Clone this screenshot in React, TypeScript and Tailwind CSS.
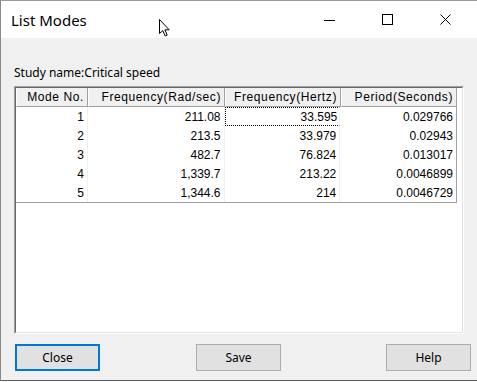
import React from "react";

const columns = [
  { title: "Mode No.", width: "w-[72px]" },
  { title: "Frequency(Rad/sec)", width: "w-[137px]" },
  { title: "Frequency(Hertz)", width: "w-[116px]" },
  { title: "Period(Seconds)", width: "w-[116px]" },
];

const rows = [
  ["1", "211.08", "33.595", "0.029766"],
  ["2", "213.5", "33.979", "0.02943"],
  ["3", "482.7", "76.824", "0.013017"],
  ["4", "1,339.7", "213.22", "0.0046899"],
  ["5", "1,344.6", "214", "0.0046729"],
];

function TitleBar() {
  return (
    <div className="relative flex h-[37px] items-center bg-white">
      <span className="pl-[10px] pt-[1px] text-[15px] text-black">List Modes</span>
      {/* mouse cursor */}
      <svg className="absolute left-[157px] top-[17px]" width="13" height="20" viewBox="0 0 13 20">
        <path
          d="M1.5 1.5 L1.5 15.5 L4.8 12.6 L7.2 18 L9.2 17.1 L6.9 11.8 L11.2 11.8 Z"
          fill="white"
          stroke="black"
          strokeWidth="1"
          strokeLinejoin="miter"
        />
      </svg>
      <div className="ml-auto flex h-full items-center pr-[3px]">
        <button className="flex h-full w-[58px] items-center justify-center">
          <svg width="11" height="11" viewBox="0 0 11 11">
            <path d="M0 6.5 H11" stroke="black" strokeWidth="1" />
          </svg>
        </button>
        <button className="flex h-full w-[58px] items-center justify-center">
          <svg width="11" height="11" viewBox="0 0 11 11">
            <rect x="0.5" y="0.5" width="10" height="10" fill="none" stroke="black" strokeWidth="1" />
          </svg>
        </button>
        <button className="flex h-full w-[58px] items-center justify-center">
          <svg width="11" height="11" viewBox="0 0 11 11">
            <path d="M0.5 0.5 L10.5 10.5 M10.5 0.5 L0.5 10.5" stroke="black" strokeWidth="1" />
          </svg>
        </button>
      </div>
    </div>
  );
}

function ModeTable() {
  return (
    <div className="ml-[13px] mt-[5px] h-[248px] w-[450px] border border-t-[#a0a0a0] border-l-[#a0a0a0] border-r-white border-b-white">
      <div className="h-full w-full border border-t-[#696969] border-l-[#696969] border-r-[#e3e3e3] border-b-[#e3e3e3] bg-white font-['Liberation_Sans',Arial,sans-serif] text-[12px] text-black">
        <div className="flex h-[19px]">
          {columns.map((c) => (
            <div
              key={c.title}
              className={`${c.width} flex items-center justify-end border-r border-b border-r-[#a0a0a0] border-b-[#a0a0a0] border-l border-l-white bg-[#f0f0f0] pr-[3px] tracking-[0.6px]`}
            >
              {c.title}
            </div>
          ))}
        </div>
        <div className="w-[441px] border-r border-b border-[#a0a0a0]">
          {rows.map((r, i) => (
            <div key={i} className="flex h-[19px]">
              {r.map((v, j) => (
                <div
                  key={j}
                  className={`${columns[j].width} flex items-center justify-end ${
                    j < 3 ? "border-r border-r-[#f0f0f0]" : ""
                  } ${i === 0 && j === 2 ? "border border-dotted border-black pr-[2px]" : "pr-[3px]"}`}
                >
                  {v}
                </div>
              ))}
            </div>
          ))}
        </div>
      </div>
    </div>
  );
}

function DialogButton({ label, focused, className }: { label: string; focused?: boolean; className?: string }) {
  return (
    <button
      className={`flex h-[27px] w-[85px] items-center justify-center bg-[#e1e1e1] text-[12px] text-black ${
        focused ? "border-2 border-[#0078d7]" : "border border-[#adadad]"
      } ${className ?? ""}`}
    >
      {label}
    </button>
  );
}

export default function App() {
  return (
    <div className="flex h-[381px] w-[477px] flex-col border-t border-l border-b border-t-[#9a9a9a] border-l-[#8a8a8a] border-b-[#5a5a5a] bg-[#f0f0f0] font-['Segoe_UI','Noto_Sans',sans-serif]">
      <TitleBar />
      <div className="flex flex-1 flex-col">
        <div className="pl-[13px] pt-[27px] text-[12px] leading-[16px] text-black">Study name:Critical speed</div>
        <ModeTable />
        <div className="mt-[10px] flex pl-[14px] pr-[6px]">
          <DialogButton label="Close" focused />
          <DialogButton label="Save" className="ml-[96px]" />
          <DialogButton label="Help" className="ml-auto" />
        </div>
      </div>
    </div>
  );
}
